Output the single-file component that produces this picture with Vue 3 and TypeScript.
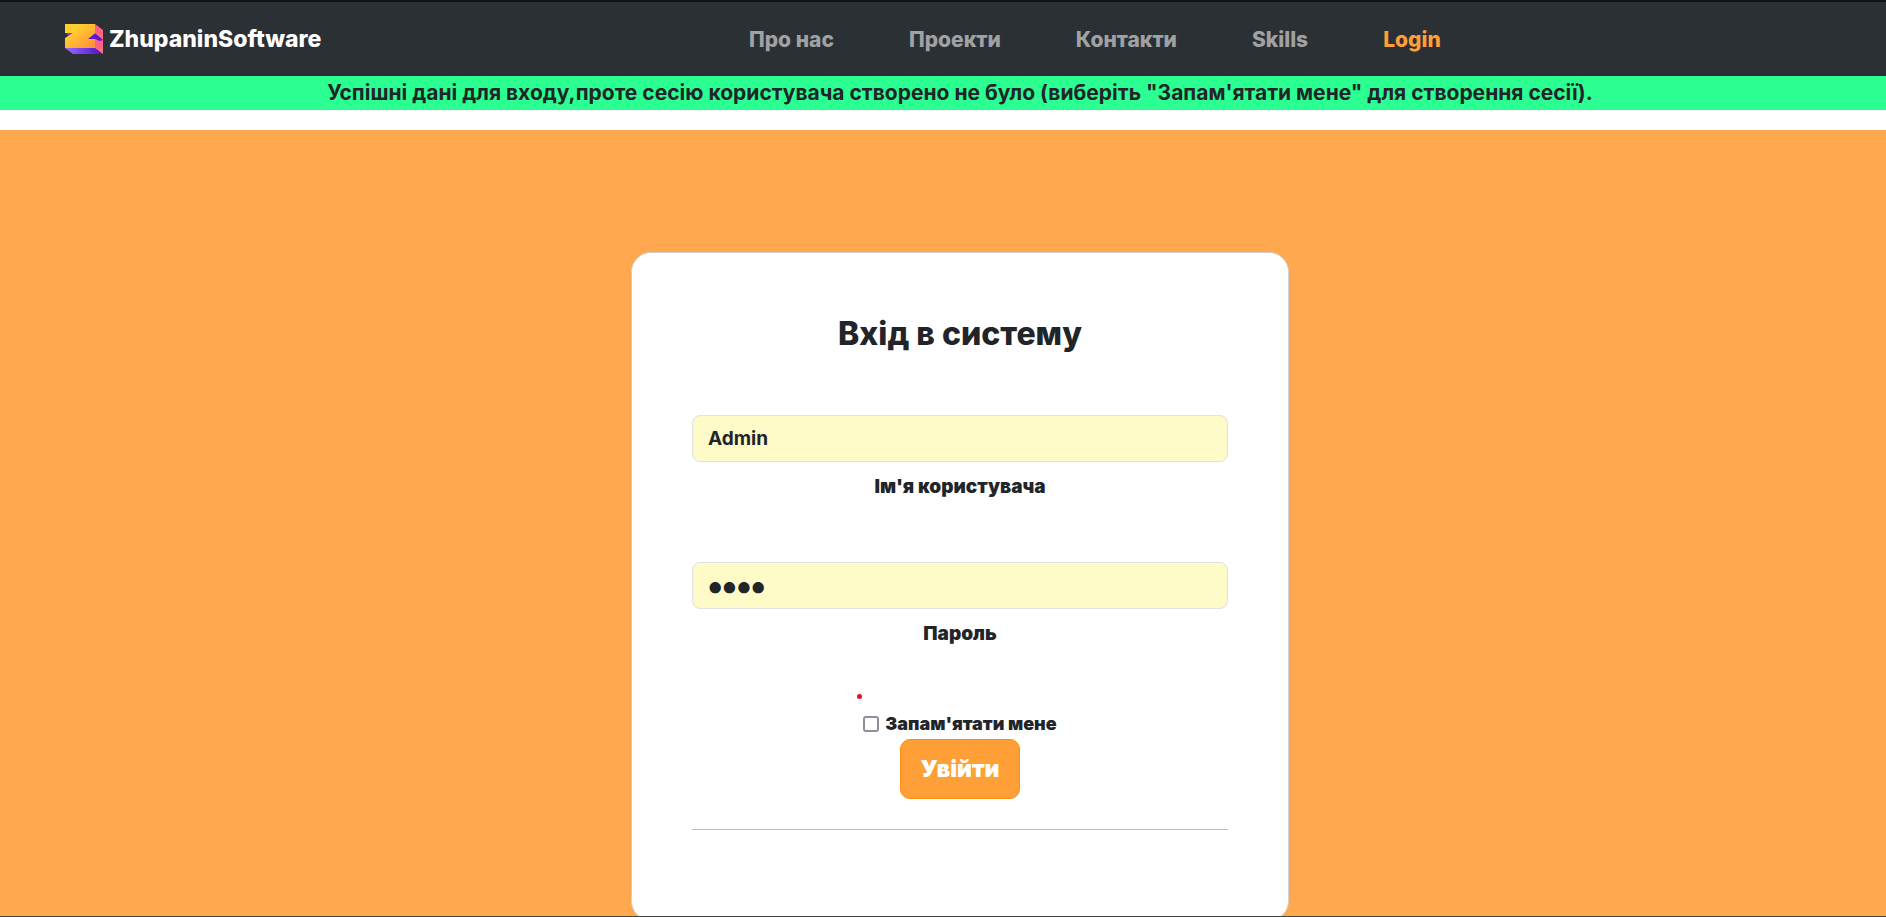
<script setup lang="ts">
import { ref } from 'vue'

interface NavLink {
  label: string
  href: string
  accent?: boolean
}

const links: NavLink[] = [
  { label: 'Про нас', href: '#about' },
  { label: 'Проекти', href: '#projects' },
  { label: 'Контакти', href: '#contacts' },
  { label: 'Skills', href: '#skills' },
  { label: 'Login', href: '#login', accent: true },
]

const username = ref('Admin')
const password = ref('1234')
const remember = ref(false)
</script>

<template>
  <div class="page">
    <header class="navbar">
      <a class="brand" href="#home">
        <svg class="logo" viewBox="0 0 38 30" aria-hidden="true">
          <defs>
            <linearGradient id="face" x1="0" y1="0" x2="1" y2="1">
              <stop offset="0.3" stop-color="#ffcd2e" />
              <stop offset="1" stop-color="#ff8a3d" />
            </linearGradient>
            <linearGradient id="base" x1="0" y1="0" x2="1" y2="0">
              <stop offset="0" stop-color="#9a6cff" />
              <stop offset="1" stop-color="#4a0fc4" />
            </linearGradient>
            <linearGradient id="side" x1="0" y1="0" x2="0" y2="1">
              <stop offset="0" stop-color="#ff5a8a" />
              <stop offset="1" stop-color="#ff6f7c" />
            </linearGradient>
          </defs>
          <path d="M1 9h8l-5 4.500z" fill="#7a35e8" />
          <path d="M0 24h30l8 6H8z" fill="url(#base)" />
          <path d="M30 0l8 6v10l-8-6.500z" fill="url(#side)" />
          <path d="M30 15h8v15l-8-6z" fill="url(#side)" />
          <path d="M23 15l7-5.500 8 6.500-3 1-5-2z" fill="#5a17d6" />
          <path d="M0 0h30v9.500L23 15h7v9H0V14l8-5H0z" fill="url(#face)" />
        </svg>
        <span>ZhupaninSoftware</span>
      </a>
      <nav class="links">
        <a v-for="link in links" :key="link.label" :href="link.href" :class="{ accent: link.accent }">{{ link.label }}</a>
      </nav>
    </header>

    <p class="notice" role="status">Успішні дані для входу,проте сесію користувача створено не було (виберіть "Запам'ятати мене" для створення сесії).</p>

    <main class="stage">
      <form class="card" @submit.prevent>
        <h1>Вхід в систему</h1>
        <div class="field">
          <input id="username" v-model="username" type="text" />
          <label for="username">Ім'я користувача</label>
        </div>
        <div class="field">
          <input id="password" v-model="password" type="password" />
          <label for="password">Пароль</label>
        </div>
        <div class="remember">
          <input id="remember" v-model="remember" type="checkbox" />
          <label for="remember">Запам'ятати мене</label>
          <span class="dot"></span>
        </div>
        <button type="submit">Увійти</button>
        <hr />
      </form>
    </main>
  </div>
</template>

<style>
body {
  margin: 0;
}
</style>

<style scoped>
.page {
  box-sizing: border-box;
  display: flex;
  flex-direction: column;
  height: 100vh;
  overflow: hidden;
  border-top: 2px solid #101213;
  border-bottom: 1px solid #444444;
  background: #ffffff;
  color: #212529;
  font-family: Inter, "Liberation Sans", sans-serif;
  font-weight: 700;
}

.navbar {
  display: grid;
  grid-template-columns: 684px 1fr;
  align-items: center;
  flex: none;
  height: 74px;
  padding-left: 65px;
  background: #2b3035;
  font-size: 21px;
}

.brand {
  display: flex;
  align-items: center;
  gap: 6px;
  color: #ffffff;
  font-size: 23px;
  font-weight: 800;
  text-decoration: none;
}

.logo {
  width: 38px;
  height: 30px;
}

.links {
  display: flex;
  gap: 75px;
  font-weight: 800;
}

.links a {
  color: #9fa1a3;
  text-decoration: none;
}

.links .accent {
  color: #ff9f38;
}

.notice {
  flex: none;
  margin: 0 0 20px;
  padding-left: 34px;
  background: #2bff92;
  font-size: 21px;
  line-height: 34px;
  text-align: center;
}

.stage {
  flex: 1;
  min-height: 0;
  padding: 122px 0 0 34px;
  background: #ffa850;
}

.card {
  box-sizing: border-box;
  display: flex;
  flex-direction: column;
  align-items: center;
  width: 100%;
  max-width: 658px;
  margin: 0 auto;
  padding: 60px 60px 90px;
  border: 1px solid #d2d2d2;
  border-radius: 20px;
  background: #ffffff;
}

h1 {
  margin: 0 0 60px;
  font-size: 32px;
  font-weight: 800;
  line-height: 42px;
}

.field {
  display: flex;
  flex-direction: column;
  align-items: center;
  gap: 11px;
  width: 100%;
  margin-bottom: 61px;
}

.field input {
  box-sizing: border-box;
  width: 100%;
  height: 47px;
  padding: 0 15px;
  border: 1px solid #dee2e6;
  border-radius: 8px;
  background: #fffbc8;
  color: inherit;
  font: inherit;
  font-size: 19px;
}

.field input[type="password"] {
  padding-bottom: 2px;
  font-size: 36px;
  font-weight: 900;
}

.field label {
  font-size: 19px;
  font-weight: 900;
  line-height: 28px;
}

.remember {
  position: relative;
  display: flex;
  align-items: center;
  gap: 6px;
  font-size: 18px;
  font-weight: 900;
  line-height: 30px;
}

.remember input {
  box-sizing: border-box;
  appearance: none;
  width: 16px;
  height: 16px;
  margin: 0;
  border: 2px solid #8f8f9d;
  border-radius: 3px;
  background: #ffffff;
}

.dot {
  position: absolute;
  top: -15px;
  left: -6px;
  width: 5px;
  height: 5px;
  border-radius: 50%;
  background: #e81123;
}

button {
  width: 120px;
  height: 60px;
  padding: 0;
  border: 1px solid #ff8b0f;
  border-radius: 10px;
  background: #ff9f38;
  color: #ffffff;
  font: inherit;
  font-size: 23px;
  font-weight: 900;
}

hr {
  flex: none;
  width: 100%;
  height: 1px;
  margin: 30px 0 0;
  border: 0;
  background: #c0c0c0;
}
</style>
